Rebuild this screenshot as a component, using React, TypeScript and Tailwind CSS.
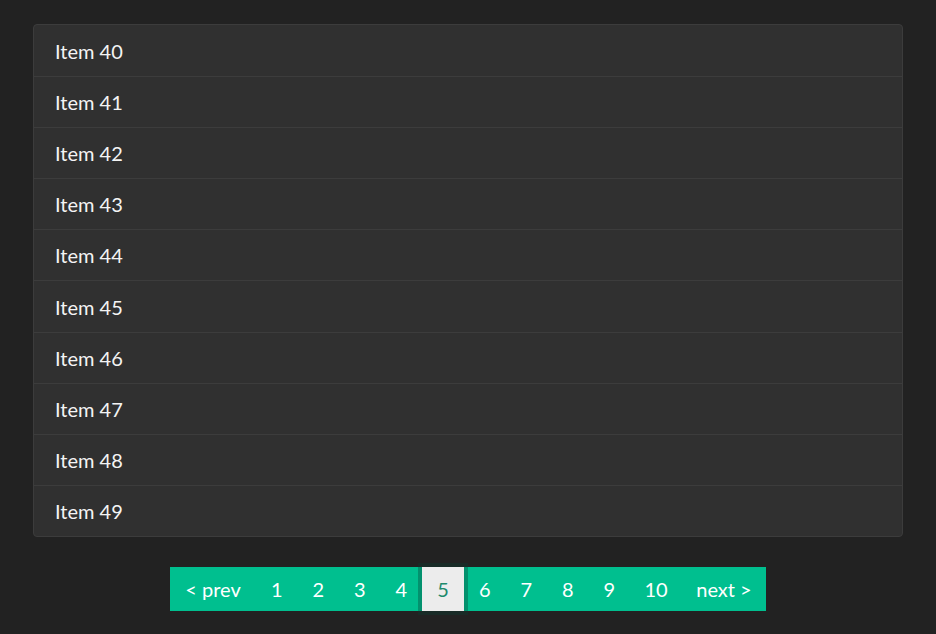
import React from "react";

export default function App() {
  const items = Array.from({ length: 10 }, (_, i) => 40 + i);
  const pages = [1, 2, 3, 4, 5, 6, 7, 8, 9, 10];
  return (
    <div
      className="w-[936px] h-[634px] bg-[#222222] pt-[24px] px-[33px]"
      style={{ fontFamily: "Lato, 'Open Sans', sans-serif" }}
    >
      <div className="rounded-[4px] border border-[#3c3c3c] bg-[#303030] overflow-hidden">
        {items.map((n, i) => (
          <div
            key={n}
            className={`h-[51.1px] flex items-center pl-[21px] text-[20px] text-[#f4f4f4] ${i > 0 ? "border-t border-[#3c3c3c]" : ""}`}
          >
            Item {n}
          </div>
        ))}
      </div>
      <div className="flex justify-center mt-[30px]">
        <div className="flex h-[44px] bg-[#00bf8f] text-white text-[20px] items-stretch">
          <div className="flex items-center justify-center w-[86px] pt-[1px]">&lt; prev</div>
          {pages.map((p) => (
            <div
              key={p}
              className={
                p === 5
                  ? "flex items-center justify-center w-[42px] pt-[1px] bg-[#ececec] text-[#1e8a6c] shadow-[0_0_0_4px_rgba(10,60,50,0.35)] relative z-10"
                  : `flex items-center justify-center pt-[1px] ${p === 10 ? "w-[52px]" : "w-[41.5px]"}`
              }
            >
              {p}
            </div>
          ))}
          <div className="flex items-center justify-center w-[84px] pt-[1px]">next &gt;</div>
        </div>
      </div>
    </div>
  );
}
